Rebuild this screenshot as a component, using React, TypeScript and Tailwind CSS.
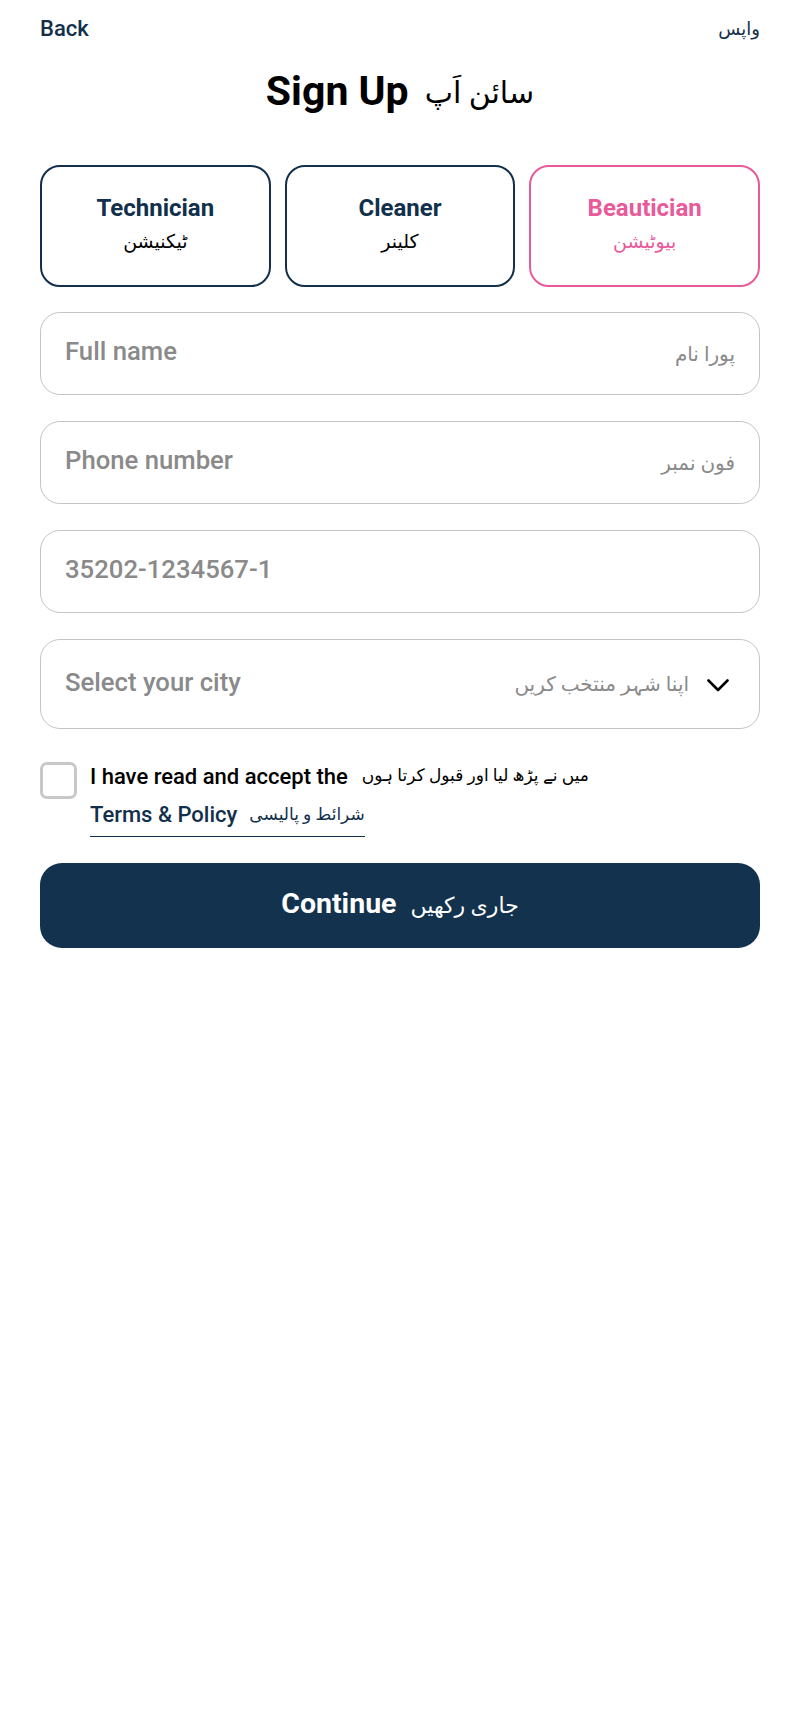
const roles = [
  { en: "Technician", ur: "ٹیکنیشن", active: false },
  { en: "Cleaner", ur: "کلینر", active: false },
  { en: "Beautician", ur: "بیوٹیشن", active: true },
];

function Field({ en, ur, tall, chevron }: { en: string; ur?: string; tall?: boolean; chevron?: boolean }) {
  return (
    <div
      className={`flex items-center justify-between rounded-[20px] border border-[#c4c4c4] pl-6 ${chevron ? "pr-[30px]" : "pr-6"} ${tall ? "h-[90px]" : "h-[83px]"}`}
    >
      <span className="-mt-[4px] text-[25.7px] font-medium text-[#8a8a8a]">{en}</span>
      <div className="flex items-center gap-[18px]">
        {ur && <span dir="rtl" className="text-[20px] text-[#8a8a8a]">{ur}</span>}
        {chevron && (
          <svg width="22" height="13" viewBox="0 0 22 13" fill="none" className="mt-[2px]">
            <polyline points="1.5,1.5 11,11 20.5,1.5" stroke="#000" strokeWidth="2.6" strokeLinecap="round" strokeLinejoin="round" />
          </svg>
        )}
      </div>
    </div>
  );
}

export default function App() {
  return (
    <div className="min-h-[1733px] w-[800px] bg-white px-10 font-['Roboto','DejaVu_Sans',sans-serif]">
      <div className="flex h-[52px] items-center justify-between pt-[4px]">
        <span className="text-[22px] font-medium text-[#12304b]">Back</span>
        <span dir="rtl" className="text-[18px] text-[#12304b]">واپس</span>
      </div>

      <div className="flex h-[80px] items-center justify-center gap-[16px]">
        <h1 className="text-[41px] font-bold text-black">Sign Up</h1>
        <span dir="rtl" className="text-[30px] text-black">سائن اَپ</span>
      </div>

      <div className="mt-[33px] grid grid-cols-3 gap-[14px]">
        {roles.map((r) => (
          <div
            key={r.en}
            className={`flex h-[122px] flex-col items-center justify-center gap-[2px] rounded-[20px] border-2 pb-[5px] ${r.active ? "border-[#e95a9a] text-[#e95a9a]" : "border-[#12304b] text-[#12304b]"}`}
          >
            <span className="text-[24px] font-bold">{r.en}</span>
            <span dir="rtl" className={`text-[19px] ${r.active ? "text-[#e95a9a]" : "text-black"}`}>{r.ur}</span>
          </div>
        ))}
      </div>

      <div className="mt-[25px] flex flex-col gap-[26px]">
        <Field en="Full name" ur="پورا نام" />
        <Field en="Phone number" ur="فون نمبر" />
        <Field en="35202-1234567-1" />
        <Field en="Select your city" ur="اپنا شہر منتخب کریں" tall chevron />
      </div>

      <div className="mt-[32px] flex gap-[13px]">
        <div className="mt-[1px] size-[37px] shrink-0 rounded-[7px] border-[3px] border-[#c8c8c8]" />
        <div className="flex flex-col">
          <div className="flex h-[30px] items-center gap-[14px]">
            <span className="text-[22px] font-medium text-black">I have read and accept the</span>
            <span dir="rtl" className="text-[17px] text-black">میں نے پڑھ لیا اور قبول کرتا ہوں</span>
          </div>
          <div className="mt-[7px] flex items-center gap-[12px] self-start border-b-[1.5px] border-[#12304b] pb-[5px]">
            <span className="text-[22px] font-medium text-[#12304b]">Terms &amp; Policy</span>
            <span dir="rtl" className="text-[17px] text-[#12304b]">شرائط و پالیسی</span>
          </div>
        </div>
      </div>

      <button className="mt-[26px] flex h-[85px] w-full items-center justify-center gap-[14px] rounded-[22px] bg-[#12324d] text-white">
        <span className="-mt-[2px] text-[28.5px] font-bold">Continue</span>
        <span dir="rtl" className="text-[22px]">جاری رکھیں</span>
      </button>
    </div>
  );
}
